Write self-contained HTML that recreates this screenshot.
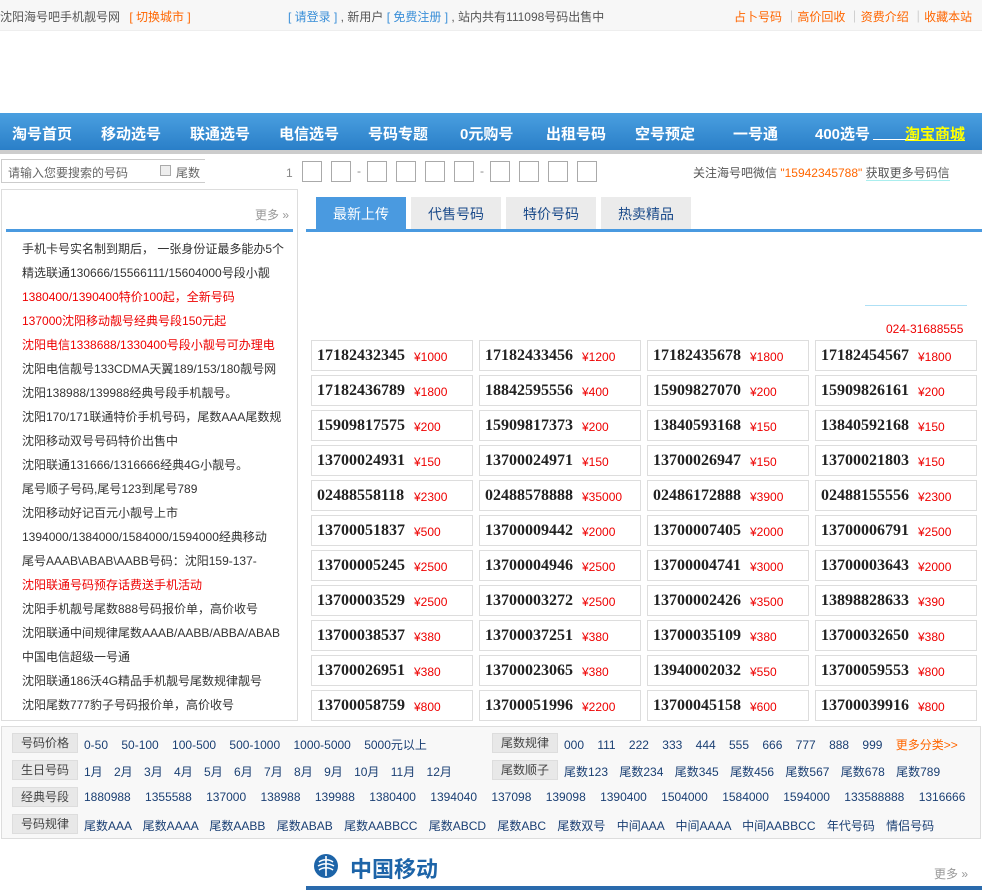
<!DOCTYPE html>
<html><head><meta charset="utf-8"><style>
*{margin:0;padding:0;box-sizing:border-box}
body{width:982px;height:893px;position:relative;background:#fff;font-family:"Liberation Sans","Noto Sans CJK SC",sans-serif;font-size:12px;color:#333;overflow:hidden}
.a{position:absolute;white-space:nowrap}
.top{left:0;top:0;width:982px;height:31px;background:#f7f7f7;border-bottom:1px solid #eee}
.nav{left:0;top:113px;width:982px;height:37px;background:linear-gradient(#4a9fe0,#2a7fc8)}
.nav span{position:absolute;top:10px;color:#fff;font-size:15px;font-weight:bold}
.box{border:1px solid #aaa;width:20px;height:21px;top:161px}
.tab{top:197px;width:90px;height:32px;background:#ebebeb;color:#1a4a8a;font-size:14px;text-align:center;line-height:34px}
.cell{width:162px;height:31px;border:1px solid #ddd}
.cell b{position:absolute;left:5px;top:6px;font-family:"Liberation Serif",serif;font-size:16px;color:#222}
.cell i{position:absolute;left:102px;top:9px;font-style:normal;color:#e00;font-size:12px}
.ln{left:22px;font-size:12px}
.r{color:#e00}
.cat{left:1px;top:726px;width:980px;height:113px;background:#f8f8f8;border:1px solid #ddd}
.lab{position:absolute;left:10px;width:66px;height:20px;background:#e8e8e8;border:1px solid #ddd;text-align:center;line-height:18px;color:#444}
.lab2{left:490px}
.row{position:absolute;color:#1a3f73}
</style></head><body>
<div class="a top"></div>
<div class="a" style="left:0;top:8px;color:#555">沈阳海号吧手机靓号网 <span style="color:#f60;margin-left:6px">[ 切换城市 ]</span></div>
<div class="a" style="left:288px;top:8px;color:#555"><span style="color:#3a8fd8">[ 请登录 ]</span> , 新用户 <span style="color:#3a8fd8">[ 免费注册 ]</span> , 站内共有111098号码出售中</div>
<div class="a" style="left:734px;top:8px;color:#f60">占卜号码 <span style="color:#aaa">｜</span>高价回收 <span style="color:#aaa">｜</span>资费介绍 <span style="color:#aaa">｜</span>收藏本站</div>
<div class="a nav">
<span style="left:12px">淘号首页</span><span style="left:101px">移动选号</span><span style="left:190px">联通选号</span><span style="left:279px">电信选号</span><span style="left:368px">号码专题</span><span style="left:460px">0元购号</span><span style="left:546px">出租号码</span><span style="left:635px">空号预定</span><span style="left:733px">一号通</span><span style="left:815px">400选号</span><span style="left:873px;width:42px;border-bottom:1px solid #fff;height:17px"></span><span style="left:905px;color:#ff0;text-decoration:underline">淘宝商城</span>
</div>
<div class="a" style="left:0;top:150px;width:982px;height:4px;background:#ccc"></div>
<div class="a" style="left:1px;top:159px;width:204px;height:24px;border:1px solid #ccc;border-right:none"></div>
<div class="a" style="left:8px;top:164px;color:#666">请输入您要搜索的号码</div>
<div class="a" style="left:160px;top:165px;width:11px;height:11px;border:1px solid #aaa;background:#eee"></div>
<div class="a" style="left:176px;top:164px;color:#666">尾数</div>
<div class="a" style="left:286px;top:166px;color:#888">1</div>
<div class="a box" style="left:302px"></div><div class="a box" style="left:331px"></div>
<div class="a" style="left:357px;top:164px;color:#888">-</div>
<div class="a box" style="left:367px"></div><div class="a box" style="left:396px"></div><div class="a box" style="left:425px"></div><div class="a box" style="left:454px"></div>
<div class="a" style="left:480px;top:164px;color:#888">-</div>
<div class="a box" style="left:490px"></div><div class="a box" style="left:519px"></div><div class="a box" style="left:548px"></div><div class="a box" style="left:577px"></div>
<div class="a" style="left:693px;top:164px;color:#555">关注海号吧微信 <span style="color:#f60">"15942345788"</span> <span style="border-bottom:1px solid #aee">获取更多号码信</span></div>
<div class="a" style="left:1px;top:189px;width:297px;height:532px;border:1px solid #ddd"></div>
<div class="a" style="left:255px;top:206px;color:#999">更多 »</div>
<div class="a" style="left:6px;top:229px;width:287px;height:3px;background:#4a9ae0"></div>
<div class="a ln" style="top:240px">手机卡号实名制到期后， 一张身份证最多能办5个</div>
<div class="a ln" style="top:264px">精选联通130666/15566111/15604000号段小靓</div>
<div class="a ln r" style="top:288px">1380400/1390400特价100起，全新号码</div>
<div class="a ln r" style="top:312px">137000沈阳移动靓号经典号段150元起</div>
<div class="a ln r" style="top:336px">沈阳电信1338688/1330400号段小靓号可办理电</div>
<div class="a ln" style="top:360px">沈阳电信靓号133CDMA天翼189/153/180靓号网</div>
<div class="a ln" style="top:384px">沈阳138988/139988经典号段手机靓号。</div>
<div class="a ln" style="top:408px">沈阳170/171联通特价手机号码，尾数AAA尾数规</div>
<div class="a ln" style="top:432px">沈阳移动双号号码特价出售中</div>
<div class="a ln" style="top:456px">沈阳联通131666/1316666经典4G小靓号。</div>
<div class="a ln" style="top:480px">尾号顺子号码,尾号123到尾号789</div>
<div class="a ln" style="top:504px">沈阳移动好记百元小靓号上市</div>
<div class="a ln" style="top:528px">1394000/1384000/1584000/1594000经典移动</div>
<div class="a ln" style="top:552px">尾号AAAB\ABAB\AABB号码：沈阳159-137-</div>
<div class="a ln r" style="top:576px">沈阳联通号码预存话费送手机活动</div>
<div class="a ln" style="top:600px">沈阳手机靓号尾数888号码报价单，高价收号</div>
<div class="a ln" style="top:624px">沈阳联通中间规律尾数AAAB/AABB/ABBA/ABAB</div>
<div class="a ln" style="top:648px">中国电信超级一号通</div>
<div class="a ln" style="top:672px">沈阳联通186沃4G精品手机靓号尾数规律靓号</div>
<div class="a ln" style="top:696px">沈阳尾数777豹子号码报价单，高价收号</div>
<div class="a tab" style="left:316px;background:#4a9ae0;color:#fff">最新上传</div>
<div class="a tab" style="left:411px">代售号码</div>
<div class="a tab" style="left:506px">特价号码</div>
<div class="a tab" style="left:601px">热卖精品</div>
<div class="a" style="left:306px;top:229px;width:676px;height:3px;background:#4a9ae0"></div>
<div class="a" style="left:865px;top:305px;width:102px;height:1px;background:#aee0f5"></div>
<div class="a" style="left:886px;top:322px;color:#e00">024-31688555</div>
<div id="g"></div>
<script>
var d=[["17182432345","1000"],["17182433456","1200"],["17182435678","1800"],["17182454567","1800"],["17182436789","1800"],["18842595556","400"],["15909827070","200"],["15909826161","200"],["15909817575","200"],["15909817373","200"],["13840593168","150"],["13840592168","150"],["13700024931","150"],["13700024971","150"],["13700026947","150"],["13700021803","150"],["02488558118","2300"],["02488578888","35000"],["02486172888","3900"],["02488155556","2300"],["13700051837","500"],["13700009442","2000"],["13700007405","2000"],["13700006791","2500"],["13700005245","2500"],["13700004946","2500"],["13700004741","3000"],["13700003643","2000"],["13700003529","2500"],["13700003272","2500"],["13700002426","3500"],["13898828633","390"],["13700038537","380"],["13700037251","380"],["13700035109","380"],["13700032650","380"],["13700026951","380"],["13700023065","380"],["13940002032","550"],["13700059553","800"],["13700058759","800"],["13700051996","2200"],["13700045158","600"],["13700039916","800"]];
var h="";d.forEach(function(e,i){var x=311+(i%4)*168,y=340+Math.floor(i/4)*35;h+='<div class="a cell" style="left:'+x+'px;top:'+y+'px"><b>'+e[0]+'</b><i>¥'+e[1]+'</i></div>';});
document.getElementById("g").outerHTML=h;
</script>
<div class="a cat">
<div class="lab" style="top:6px">号码价格</div><div class="row" style="left:82px;top:9px;word-spacing:10px">0-50 50-100 100-500 500-1000 1000-5000 5000元以上</div>
<div class="lab lab2" style="top:6px">尾数规律</div><div class="row" style="left:562px;top:9px;word-spacing:10px">000 111 222 333 444 555 666 777 888 999 <span style="color:#f60;word-spacing:0">更多分类&gt;&gt;</span></div>
<div class="lab" style="top:33px">生日号码</div><div class="row" style="left:82px;top:36px;word-spacing:8px">1月 2月 3月 4月 5月 6月 7月 8月 9月 10月 11月 12月</div>
<div class="lab lab2" style="top:33px">尾数顺子</div><div class="row" style="left:562px;top:36px;word-spacing:8px">尾数123 尾数234 尾数345 尾数456 尾数567 尾数678 尾数789</div>
<div class="lab" style="top:60px">经典号段</div><div class="row" style="left:82px;top:63px;word-spacing:11px">1880988 1355588 137000 138988 139988 1380400 1394040 137098 139098 1390400 1504000 1584000 1594000 133588888 1316666</div>
<div class="lab" style="top:87px">号码规律</div><div class="row" style="left:82px;top:90px;word-spacing:8px">尾数AAA 尾数AAAA 尾数AABB 尾数ABAB 尾数AABBCC 尾数ABCD 尾数ABC 尾数双号 中间AAA 中间AAAA 中间AABBCC 年代号码 情侣号码</div>
</div>
<svg class="a" style="left:313px;top:853px" width="26" height="26" viewBox="0 0 26 26"><circle cx="13" cy="13" r="12" fill="#1d64a8"/><path d="M6 9c4-3 10-3 14 0M5 13c5-3 11-3 16 0M6 17c4-3 10-3 14 0M13 3v20" stroke="#fff" stroke-width="1.6" fill="none"/></svg>
<div class="a" style="left:350px;top:852px;font-size:22px;font-weight:bold;color:#1d64a8">中国移动</div>
<div class="a" style="left:934px;top:865px;color:#999">更多 »</div>
<div class="a" style="left:306px;top:886px;width:676px;height:4px;background:#2a6aac"></div>
</body></html>
